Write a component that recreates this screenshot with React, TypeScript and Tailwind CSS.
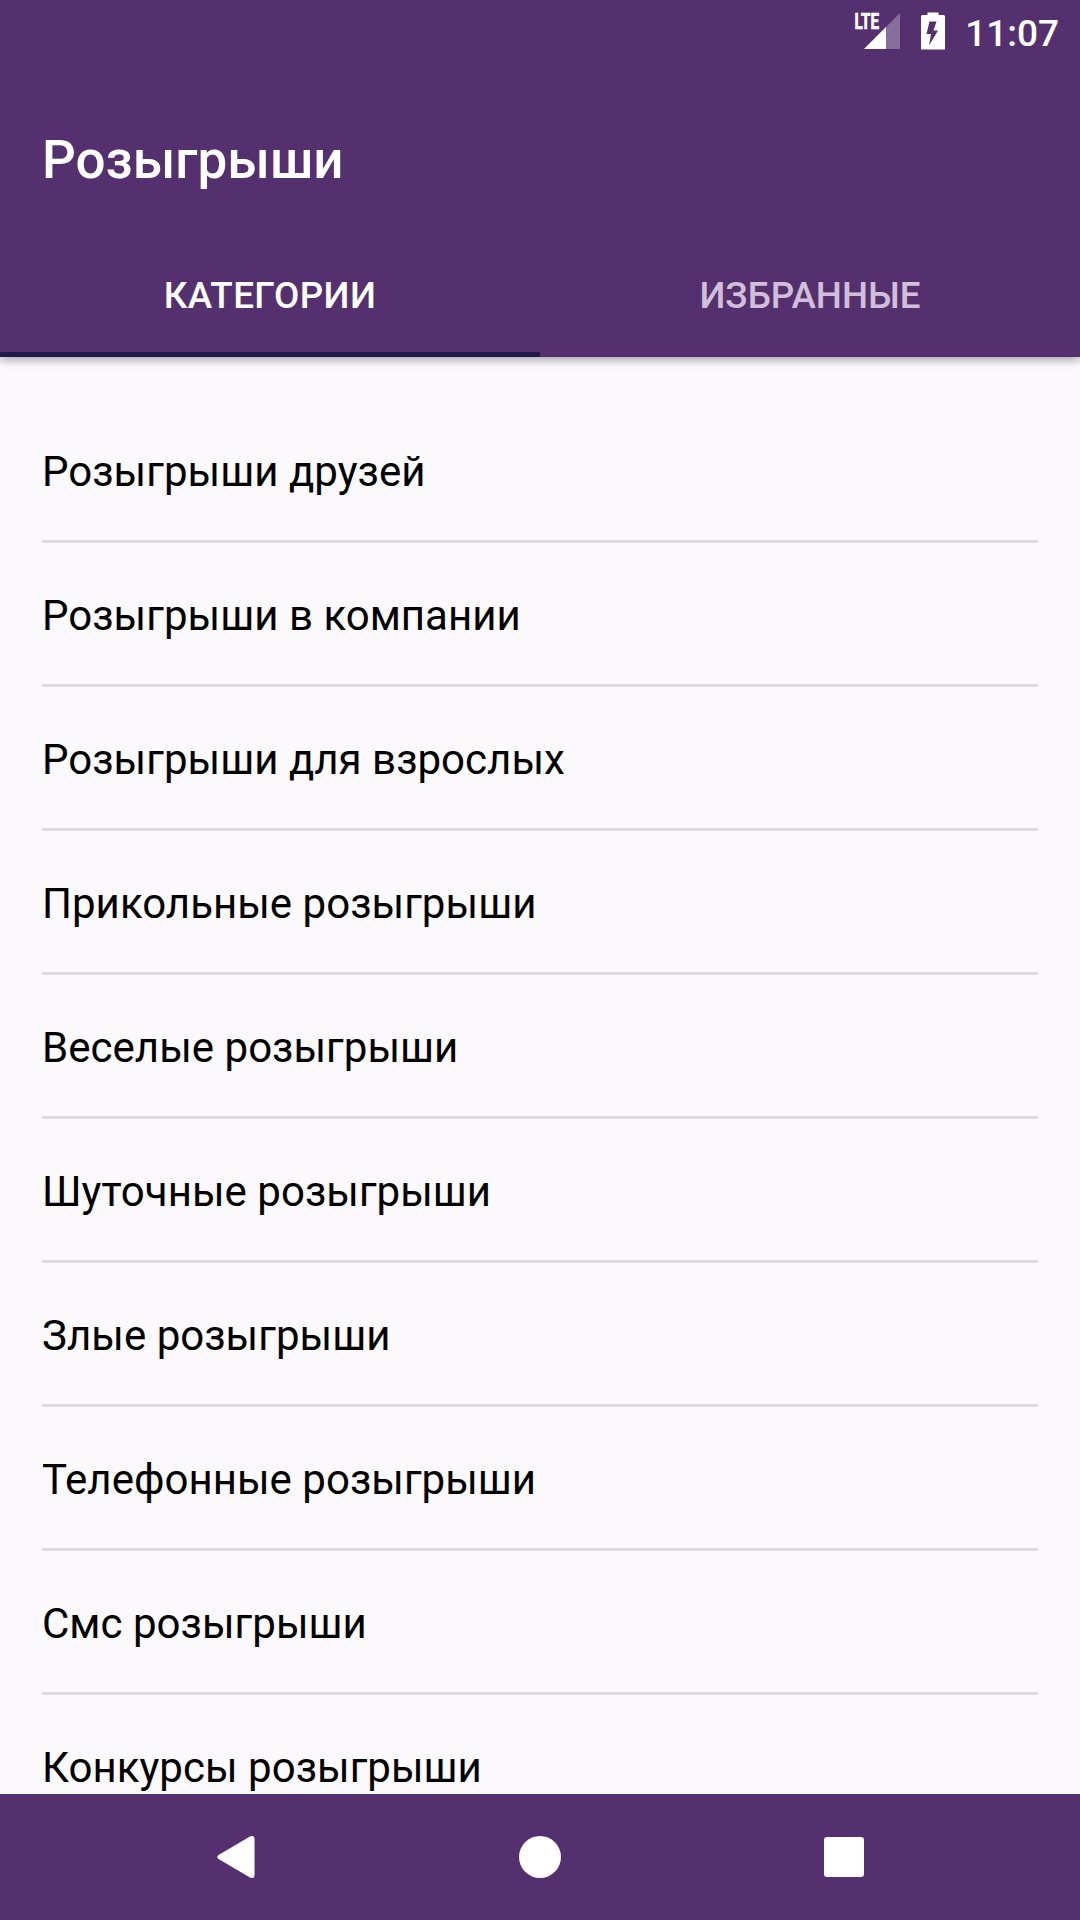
const categories = [
  'Розыгрыши друзей',
  'Розыгрыши в компании',
  'Розыгрыши для взрослых',
  'Прикольные розыгрыши',
  'Веселые розыгрыши',
  'Шуточные розыгрыши',
  'Злые розыгрыши',
  'Телефонные розыгрыши',
  'Смс розыгрыши',
  'Конкурсы розыгрыши',
];

function StatusBar() {
  return (
    <div className="flex h-[63px] items-start justify-end pr-[21px] text-white">
      <svg className="h-[50px] w-[50px] overflow-visible" viewBox="0 0 50 50">
        <path d="M50 13V49H14Z" fill="#fff" fillOpacity="0.3" />
        <path d="M36 27V49H14Z" fill="#fff" />
        <text x="4.5" y="29" fontSize="21.5" fontWeight="700" textLength="24.5" lengthAdjust="spacingAndGlyphs" fill="#fff" stroke="#fff" strokeWidth="0.7">LTE</text>
      </svg>
      <svg className="mt-3 ml-[21px] h-[38px] w-6" viewBox="0 0 24 38">
        <path fillRule="evenodd" d="M6.5 0.5H17.5V3H23L24 4V37.5H0V4L1 3H6.5ZM8.5 9.5L5.5 22H10L8 33.5L17 18.5H12.5L15.5 9.5Z" fill="#fff" />
      </svg>
      <span className="mt-3 ml-5 text-[37px] leading-[44px] font-medium">11:07</span>
    </div>
  );
}

function Tabs() {
  return (
    <div className="flex h-[126px] text-[36.75px] leading-[43px] font-medium">
      <button className="flex flex-1 items-center justify-center border-b-[5px] border-[#21184a] pt-[7px] tracking-[0.4px] text-white">
        КАТЕГОРИИ
      </button>
      <button className="flex flex-1 items-center justify-center pt-[3px] text-[#d0bfda]">
        ИЗБРАННЫЕ
      </button>
    </div>
  );
}

function NavigationBar() {
  return (
    <nav className="flex h-[126px] shrink-0 items-center bg-[#55306f] pl-[217px]">
      <svg className="h-[42px] w-[38px]" viewBox="0 0 38 42">
        <path d="M33 0.5Q37.5 -1 37.5 3V39Q37.5 43 33 41.5L1.5 23Q-1 21 1.5 19Z" fill="#fff" />
      </svg>
      <div className="ml-[264px] size-[42px] rounded-full bg-white" />
      <div className="ml-[263px] size-10 rounded-[3px] bg-white" />
    </nav>
  );
}

export default function App() {
  return (
    <div className="flex h-[1920px] w-[1080px] flex-col overflow-hidden bg-[#fbf9fc] font-['Roboto',sans-serif]">
      <header className="relative z-10 h-[357px] shrink-0 bg-[#55306f] shadow-[0_3px_9px_rgba(0,0,0,0.35)]">
        <StatusBar />
        <h1 className="mt-[21px] flex h-[147px] items-center pt-[7px] pl-[42px] text-[53px] font-medium text-white">
          Розыгрыши
        </h1>
        <Tabs />
      </header>

      <main className="min-h-0 flex-1 overflow-hidden px-[42px] pt-[42px]">
        <ul>
          {categories.map((category) => (
            <li key={category} className="flex h-36 items-center border-b-[3px] border-[#dbd9dd] pt-[3px] text-[42px] leading-[49px] tracking-[0.03px] text-black">
              {category}
            </li>
          ))}
        </ul>
      </main>

      <NavigationBar />
    </div>
  );
}
